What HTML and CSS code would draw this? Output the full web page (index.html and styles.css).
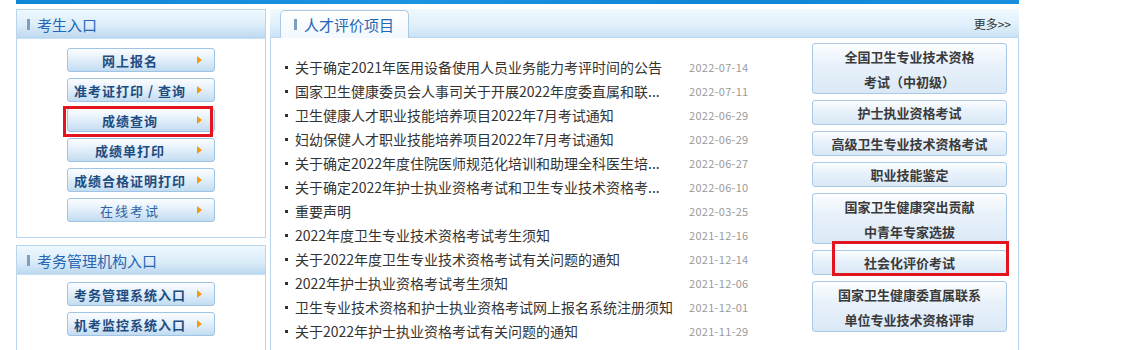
FILE: index.html
```html
<!DOCTYPE html>
<html lang="zh-CN">
<head>
    <meta charset="UTF-8">
    <title>人才评价项目</title>
    <link rel="stylesheet" href="styles.css">
</head>
<body>

    <div class="topbar"></div>

    <div class="wrap">
        <div class="side">
            <div class="box box-exam">
                <div class="box-head"><i class="bar"></i>考生入口</div>
                <div class="box-body">
                    <a class="sbtn">网上报名</a>
                    <a class="sbtn">准考证打印 / 查询</a>
                    <a class="sbtn marked">成绩查询<span class="mark mark-left"></span></a>
                    <a class="sbtn">成绩单打印</a>
                    <a class="sbtn">成绩合格证明打印</a>
                    <a class="sbtn light">在线考试</a>
                </div>
            </div>
            <div class="box box-org">
                <div class="box-head"><i class="bar"></i>考务管理机构入口</div>
                <div class="box-body">
                    <a class="sbtn">考务管理系统入口</a>
                    <a class="sbtn">机考监控系统入口</a>
                </div>
            </div>
        </div>

        <div class="main">
            <div class="main-head">
                <div class="tab"><i class="bar"></i>人才评价项目</div>
                <a class="more">更多&gt;&gt;</a>
            </div>
            <div class="main-body">
                <ul class="news">
                    <li><span class="title">关于确定2021年医用设备使用人员业务能力考评时间的公告</span><span class="date">2022-07-14</span></li>
                    <li><span class="title">国家卫生健康委员会人事司关于开展2022年度委直属和联...</span><span class="date">2022-07-11</span></li>
                    <li><span class="title">卫生健康人才职业技能培养项目2022年7月考试通知</span><span class="date">2022-06-29</span></li>
                    <li><span class="title">妇幼保健人才职业技能培养项目2022年7月考试通知</span><span class="date">2022-06-29</span></li>
                    <li><span class="title">关于确定2022年度住院医师规范化培训和助理全科医生培...</span><span class="date">2022-06-27</span></li>
                    <li><span class="title">关于确定2022年护士执业资格考试和卫生专业技术资格考...</span><span class="date">2022-06-10</span></li>
                    <li><span class="title">重要声明</span><span class="date">2022-03-25</span></li>
                    <li><span class="title">2022年度卫生专业技术资格考试考生须知</span><span class="date">2021-12-16</span></li>
                    <li><span class="title">关于2022年度卫生专业技术资格考试有关问题的通知</span><span class="date">2021-12-14</span></li>
                    <li><span class="title">2022年护士执业资格考试考生须知</span><span class="date">2021-12-06</span></li>
                    <li><span class="title">卫生专业技术资格和护士执业资格考试网上报名系统注册须知</span><span class="date">2021-12-01</span></li>
                    <li><span class="title">关于2022年护士执业资格考试有关问题的通知</span><span class="date">2021-11-29</span></li>
                </ul>
                <div class="projects">
                    <a class="pbtn double">全国卫生专业技术资格<br>考试（中初级）</a>
                    <a class="pbtn">护士执业资格考试</a>
                    <a class="pbtn">高级卫生专业技术资格考试</a>
                    <a class="pbtn">职业技能鉴定</a>
                    <a class="pbtn double">国家卫生健康突出贡献<br>中青年专家选拔</a>
                    <a class="pbtn marked">社会化评价考试<span class="mark mark-right"></span></a>
                    <a class="pbtn double">国家卫生健康委直属联系<br>单位专业技术资格评审</a>
                </div>
            </div>
        </div>
    </div>

</body>
</html>
```

FILE: styles.css
```css
body {
    margin: 0;
    font-family: "Noto Sans CJK SC", sans-serif;
    background: #ffffff;
    color: #333333;
}
a {
    text-decoration: none;
    cursor: pointer;
}
.topbar {
    margin-left: 16px;
    width: 1003px;
    height: 4px;
    background: linear-gradient(90deg, #1185d6, #1d93e2 40%, #0d86d8 70%, #1a8fe0);
}
.wrap {
    display: flex;
    gap: 4px;
    margin: 5px 0 0 16px;
}

/* left column */
.side {
    width: 250px;
    display: flex;
    flex-direction: column;
    gap: 7px;
}
.box {
    border: 1px solid #b9d6ee;
    box-sizing: border-box;
}
.box-exam {
    height: 229px;
}
.box-org {
    height: 110px;
}
.box-head {
    height: 28px;
    display: flex;
    align-items: center;
    padding-left: 10px;
    font-size: 15px;
    color: #2467b4;
    background: linear-gradient(#eef8fe, #dcedfa 55%, #bcd8ef);
    border-bottom: 1px solid #c6dff2;
}
.bar {
    display: inline-block;
    width: 3px;
    height: 11px;
    background: #7d9fc2;
    margin-right: 7px;
}
.box-body {
    display: flex;
    flex-direction: column;
    align-items: center;
    gap: 6px;
    padding: 9px 0 0 0;
}
.box-org .box-body {
    padding-top: 7px;
}
.sbtn {
    position: relative;
    width: 148px;
    height: 24px;
    box-sizing: border-box;
    display: flex;
    align-items: center;
    justify-content: center;
    padding-right: 22px;
    border: 1px solid #9fc4e4;
    border-radius: 3px;
    background: linear-gradient(#fbfdff, #e4f0fa 45%, #c3dcf1);
    font-size: 13px;
    font-weight: bold;
    letter-spacing: 1px;
    color: #1f4c80;
    white-space: nowrap;
}
.sbtn::after {
    content: "";
    position: absolute;
    right: 12px;
    top: 7px;
    border-left: 5px solid #f59a0c;
    border-top: 4px solid transparent;
    border-bottom: 4px solid transparent;
}
.sbtn.light {
    font-weight: normal;
    color: #2e62a3;
    letter-spacing: 2px;
}
.marked {
    position: relative;
}
.mark {
    position: absolute;
    border: 3px solid #e3141d;
    box-sizing: border-box;
    pointer-events: none;
}
.mark-left {
    left: -5px;
    top: -3px;
    width: 150px;
    height: 31px;
}
.mark-right {
    left: 19px;
    top: -10px;
    width: 177px;
    height: 35px;
}

/* main column */
.main {
    width: 749px;
}
.main-head {
    height: 29px;
    box-sizing: border-box;
    display: flex;
    align-items: flex-end;
    justify-content: space-between;
    background: linear-gradient(#f0f9fe, #e1f0fb 55%, #cbe2f5);
    border-bottom: 1px solid #b9d6ee;
    padding: 0 8px 0 10px;
}
.tab {
    width: 129px;
    height: 28px;
    box-sizing: border-box;
    margin-bottom: -1px;
    display: flex;
    align-items: center;
    padding-left: 13px;
    border: 1px solid #a9cbe8;
    border-bottom: none;
    border-radius: 5px 5px 0 0;
    background: linear-gradient(#ffffff, #f2f8fd);
    font-size: 15px;
    color: #2467b4;
}
.more {
    align-self: center;
    font-size: 12px;
    color: #333333;
}
.main-body {
    display: flex;
    border-left: 1px solid #b9d6ee;
    border-right: 1px solid #b9d6ee;
    height: 320px;
}
.news {
    list-style: none;
    margin: 0;
    padding: 17px 0 0 14px;
    width: 515px;
}
.news li {
    height: 24px;
    display: flex;
    align-items: center;
    font-size: 14px;
    color: #333333;
}
.news li::before {
    content: "";
    width: 3px;
    height: 3px;
    background: #333333;
    margin-right: 7px;
    flex: none;
}
.title {
    width: 394px;
    white-space: nowrap;
}
.date {
    font-size: 11px;
    color: #9a9a9a;
    letter-spacing: 0.3px;
}
.projects {
    display: flex;
    flex-direction: column;
    gap: 6px;
    padding: 5px 0 0 12px;
}
.pbtn {
    position: relative;
    width: 195px;
    height: 25px;
    box-sizing: border-box;
    display: flex;
    align-items: center;
    justify-content: center;
    text-align: center;
    border: 1px solid #a9c9e7;
    border-radius: 3px;
    background: linear-gradient(#fdfeff, #e9f2fb 40%, #dae8f6);
    font-size: 13px;
    font-weight: bold;
    color: #3a3a3a;
}
.pbtn.double {
    height: 51px;
    line-height: 25px;
}
```
